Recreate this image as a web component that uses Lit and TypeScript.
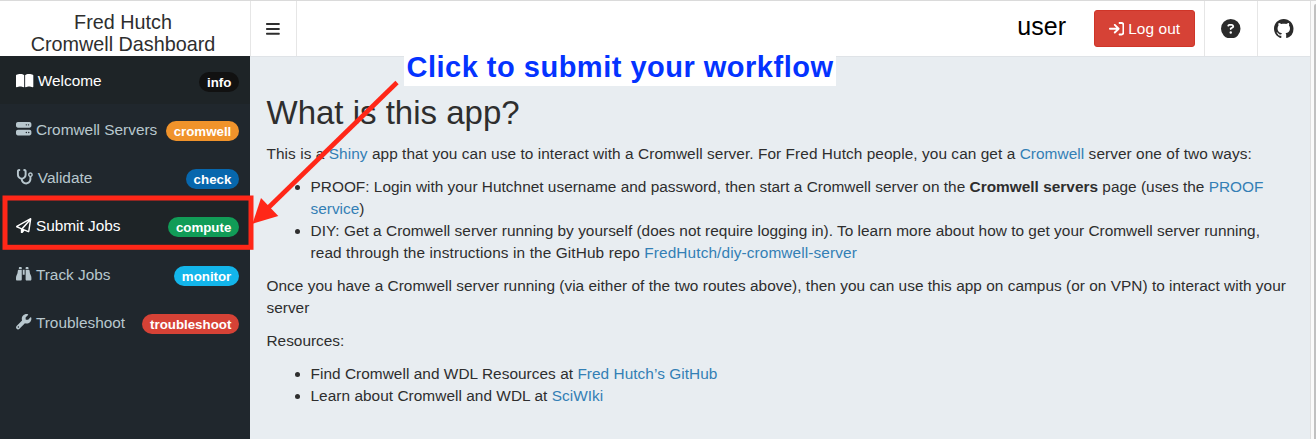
import { LitElement, html, css, svg } from "lit";
import { customElement, property } from "lit/decorators.js";

const ICONS: Record<string, { w: number; h: number; d: string }> = {
  book: { w: 576, h: 512, d: "M249.6 471.5c10.8 3.8 22.4-4.1 22.4-15.5V78.6c0-4.2-1.6-8.4-5-11C247.4 52 202.4 32 144 32C93.5 32 46.3 45.3 18.1 56.1C6.8 60.5 0 71.7 0 83.8V454.1c0 11.9 12.8 20.2 24.1 16.5C55.6 460.1 105.5 448 144 448c33.9 0 79 14 105.6 23.5zm76.8 0C353 462 398.1 448 432 448c38.5 0 88.4 12.1 119.9 22.6c11.3 3.8 24.1-4.6 24.1-16.5V83.8c0-12.1-6.8-23.3-18.1-27.6C529.7 45.3 482.5 32 432 32c-58.4 0-103.4 20-123 35.6c-3.3 2.6-5 6.8-5 11V456c0 11.4 11.7 19.3 22.4 15.5z" },
  server: { w: 512, h: 512, d: "M64 32C28.7 32 0 60.7 0 96v64c0 35.3 28.7 64 64 64H448c35.3 0 64-28.7 64-64V96c0-35.3-28.7-64-64-64H64zm280 72a24 24 0 1 1 0 48 24 24 0 1 1 0-48zm48 24a24 24 0 1 1 48 0 24 24 0 1 1 -48 0zM64 288c-35.3 0-64 28.7-64 64v64c0 35.3 28.7 64 64 64H448c35.3 0 64-28.7 64-64V352c0-35.3-28.7-64-64-64H64zm280 72a24 24 0 1 1 0 48 24 24 0 1 1 0-48zm56 24a24 24 0 1 1 48 0 24 24 0 1 1 -48 0z" },
  stethoscope: { w: 576, h: 512, d: "M142.4 21.9c5.6 16.8-3.5 34.9-20.2 40.5L96 71.1V192c0 53 43 96 96 96s96-43 96-96V71.1l-26.1-8.7c-16.8-5.6-25.8-23.7-20.2-40.5s23.7-25.8 40.5-20.2l26.1 8.7C334.4 19.1 352 43.5 352 71.1V192c0 77.2-54.6 141.6-127.3 156.7C231 404.6 278.4 448 336 448c61.9 0 112-50.1 112-112V265.3c-28.3-12.3-48-40.5-48-73.3c0-44.2 35.8-80 80-80s80 35.8 80 80c0 32.8-19.7 61-48 73.3V336c0 97.2-78.8 176-176 176c-92.9 0-168.9-71.9-175.5-163.1C87.2 334.2 32 269.6 32 192V71.1c0-27.5 17.6-52 43.8-60.7l26.1-8.7c16.8-5.6 34.9 3.5 40.5 20.2zM480 224a32 32 0 1 0 0-64 32 32 0 1 0 0 64z" },
  plane: { w: 512, h: 512, d: "M16.1 260.2c-22.6 12.9-20.5 47.3 3.6 57.3L160 376V479.3c0 18.1 14.6 32.7 32.7 32.7c9.7 0 18.9-4.3 25.1-11.8l62-74.3 123.9 51.6c18.9 7.9 40.8-4.5 43.9-24.7l64-416c1.9-12.1-3.4-24.3-13.5-31.2s-23.3-7.5-34-1.4l-448 256zm52.1 25.5L409.7 90.6 190.1 336l1.2 1L68.2 285.7zM403.3 425.4L236.7 355.9 450.8 116.6 403.3 425.4z" },
  binoculars: { w: 512, h: 512, d: "M128 32h32c17.7 0 32 14.3 32 32V96H96V64c0-17.7 14.3-32 32-32zm64 96V448c0 17.7-14.3 32-32 32H32c-17.7 0-32-14.3-32-32V388.9c0-34.6 9.4-68.6 27.2-98.3C40.9 267.8 49.7 242.4 53 216L60.5 156c2-16 15.6-28 31.8-28H192zm227.8 0c16.1 0 29.8 12 31.8 28L459 216c3.3 26.4 12.1 51.8 25.8 74.6c17.8 29.7 27.2 63.7 27.2 98.3V448c0 17.7-14.3 32-32 32H352c-17.7 0-32-14.3-32-32V128h99.8zM320 64c0-17.7 14.3-32 32-32h32c17.7 0 32 14.3 32 32V96H320V64zm-32 64V288H224V128h64z" },
  wrench: { w: 512, h: 512, d: "M352 320c88.4 0 160-71.6 160-160c0-15.3-2.2-30.1-6.2-44.2c-3.1-10.8-16.4-13.2-24.3-5.3l-76.8 76.8c-3 3-7.1 4.7-11.3 4.7H336c-8.8 0-16-7.2-16-16V118.6c0-4.2 1.7-8.3 4.7-11.3l76.8-76.8c7.9-7.9 5.4-21.2-5.3-24.3C382.1 2.2 367.3 0 352 0C263.6 0 192 71.6 192 160c0 19.1 3.4 37.5 9.5 54.5L19.9 396.1C7.2 408.8 0 426.1 0 444.1C0 481.6 30.4 512 67.9 512c18 0 35.3-7.2 48-19.9L297.5 310.5c17 6.2 35.4 9.5 54.5 9.5zM80 408a24 24 0 1 1 0 48 24 24 0 1 1 0-48z" },
  bars: { w: 448, h: 512, d: "M0 96C0 78.3 14.3 64 32 64H416c17.7 0 32 14.3 32 32s-14.3 32-32 32H32C14.3 128 0 113.7 0 96zM0 256c0-17.7 14.3-32 32-32H416c17.7 0 32 14.3 32 32s-14.3 32-32 32H32c-17.7 0-32-14.3-32-32zM448 416c0 17.7-14.3 32-32 32H32c-17.7 0-32-14.3-32-32s14.3-32 32-32H416c17.7 0 32 14.3 32 32z" },
  logout: { w: 512, h: 512, d: "M352 96l64 0c17.7 0 32 14.3 32 32l0 256c0 17.7-14.3 32-32 32l-64 0c-17.7 0-32 14.3-32 32s14.3 32 32 32l64 0c53 0 96-43 96-96l0-256c0-53-43-96-96-96l-64 0c-17.7 0-32 14.3-32 32s14.3 32 32 32zm-9.4 182.6c12.5-12.5 12.5-32.8 0-45.3l-128-128c-12.5-12.5-32.8-12.5-45.3 0s-12.5 32.8 0 45.3L242.7 224 32 224c-17.7 0-32 14.3-32 32s14.3 32 32 32l210.7 0-73.4 73.4c-12.5 12.5-12.5 32.8 0 45.3s32.8 12.5 45.3 0l128-128z" },
  question: { w: 512, h: 512, d: "M256 512A256 256 0 1 0 256 0a256 256 0 1 0 0 512zM169.8 165.3c7.9-22.3 29.1-37.3 52.8-37.3h58.3c34.9 0 63.1 28.3 63.1 63.1c0 22.6-12.1 43.5-31.7 54.8L280 264.4c-.2 13-10.9 23.6-24 23.6c-13.3 0-24-10.7-24-24V250.5c0-8.6 4.6-16.5 12.1-20.8l44.3-25.4c4.7-2.7 7.6-7.7 7.6-13.1c0-8.4-6.8-15.1-15.1-15.1H222.6c-3.4 0-6.4 2.1-7.5 5.3l-.4 1.2c-4.4 12.5-18.2 19-30.6 14.6s-19-18.2-14.6-30.6l.4-1.2zM224 352a32 32 0 1 1 64 0 32 32 0 1 1 -64 0z" },
  github: { w: 16, h: 16, d: "M8 0C3.58 0 0 3.58 0 8c0 3.54 2.29 6.53 5.47 7.59.4.07.55-.17.55-.38 0-.19-.01-.82-.01-1.49-2.01.37-2.53-.49-2.69-.94-.09-.23-.48-.94-.82-1.13-.28-.15-.68-.52-.01-.53.63-.01 1.08.58 1.23.82.72 1.21 1.87.87 2.33.66.07-.52.28-.87.51-1.07-1.78-.2-3.64-.89-3.64-3.95 0-.87.31-1.59.82-2.15-.08-.2-.36-1.02.08-2.12 0 0 .67-.21 2.2.82.64-.18 1.32-.27 2-.27.68 0 1.36.09 2 .27 1.53-1.04 2.2-.82 2.2-.82.44 1.1.16 1.92.08 2.12.51.56.82 1.27.82 2.15 0 3.07-1.87 3.75-3.65 3.95.29.25.54.73.54 1.48 0 1.07-.01 1.93-.01 2.2 0 .21.15.46.55.38A8.01 8.01 0 0 0 16 8c0-4.42-3.58-8-8-8z" },
};

@customElement("fa-icon")
class FaIcon extends LitElement {
  @property() name = "bars";
  static styles = css`
    :host { display: inline-flex; height: 15.4px; }
    svg { height: 100%; width: auto; display: block; fill: currentColor; }
  `;
  render() {
    const i = ICONS[this.name];
    return html`<svg viewBox="0 0 ${i.w} ${i.h}" width=${i.w} height=${i.h}>${svg`<path d=${i.d}></path>`}</svg>`;
  }
}

const MENU = [
  { icon: "book", label: "Welcome", badge: "info", tone: "black", active: true },
  { icon: "server", label: "Cromwell Servers", badge: "cromwell", tone: "orange" },
  { icon: "stethoscope", label: "Validate", badge: "check", tone: "blue" },
  { icon: "plane", label: "Submit Jobs", badge: "compute", tone: "green", active: true },
  { icon: "binoculars", label: "Track Jobs", badge: "monitor", tone: "aqua" },
  { icon: "wrench", label: "Troubleshoot", badge: "troubleshoot", tone: "red" },
];

@customElement("side-menu")
class SideMenu extends LitElement {
  static styles = css`
    :host { display: block; background: #20272d; }
    .item {
      box-sizing: border-box; height: 48.4px; padding: 0 11px 0 16.3px;
      display: flex; align-items: center; color: #b8c7ce; font-size: 15.4px; white-space: nowrap;
    }
    .active { background: #1e2427; color: #fff; }
    .label { margin: 2px 0 0 4.2px; line-height: 22px; }
    .badge {
      margin-left: auto; margin-top: 4px; height: 20px; line-height: 21px; padding: 0 7.7px;
      border-radius: 10px; font-size: 13.3px; font-weight: bold; color: #fff; box-sizing: border-box;
    }
    .black { background: #111; }
    .orange { background: #f0932b; }
    .blue { background: #0767ad; }
    .green { background: #119c57; }
    .aqua { background: #13b5ea; }
    .red { background: #d64236; }
  `;
  render() {
    return MENU.map(
      (m) => html`<div class="item ${m.active ? "active" : ""}">
        <fa-icon name=${m.icon}></fa-icon><span class="label">${m.label}</span>
        <span class="badge ${m.tone}">${m.badge}</span>
      </div>`
    );
  }
}

@customElement("app-root")
class AppRoot extends LitElement {
  static styles = css`
    :host {
      display: block; position: relative; height: 439px; width: 1316px; overflow: hidden; background: #fff;
      font-family: "Liberation Sans", Arial, sans-serif; font-size: 15.4px; color: #2e2e2e; line-height: 22px;
    }
    .page {
      box-sizing: border-box; height: 439px; border-top: 1px solid #dadada;
      display: grid; grid-template-columns: 250px 1060px 6px; grid-template-rows: 55px 383px;
    }
    .brand { text-align: center; font-size: 19.8px; line-height: 22px; padding-top: 10px; padding-right: 4px; white-space: nowrap; }
    .bar { display: flex; border-bottom: 1px solid #dfe3e7; box-sizing: border-box; height: 56px; }
    .cell { width: 46px; border-right: 1px solid #e6e6e6; display: flex; align-items: center; justify-content: center; }
    .start { border-left: 1px solid #e6e6e6; box-sizing: border-box; width: 47px; padding-right: 1px; }
    .start fa-icon { height: 15.8px; }
    .right { margin-left: auto; display: flex; }
    .end { box-sizing: border-box; width: 53px; border-left: 1px solid #e6e6e6; border-right: 0; color: #2b2b2b; }
    .end fa-icon { height: 19.5px; }
    .user { font-size: 25px; color: #000; line-height: 28px; margin: 11px 28px 0 0; }
    .logout {
      box-sizing: border-box; width: 101px; height: 37px; margin: 9px 9px 0 0; border: 1px solid #cf3528; border-radius: 3px;
      background: #d64236; color: #fff; display: flex; align-items: center; justify-content: center; gap: 4px; letter-spacing: 0.1px;
    }
    .scroll { grid-column: 3; grid-row: 1 / 3; display: flex; justify-content: flex-end; border-left: 1px solid #dedede; background: #fafafa; }
    .thumb { width: 2px; margin-top: 3px; background: #c1c1c1; border-top-left-radius: 2px; }
    side-menu { grid-row: 2; }
    .content { background: #e8edf1; padding: 0 16.5px; }
    .bar, .content { position: relative; }
    .bar { z-index: 1; }
    h2 { margin: 39px 0 0; font-size: 33px; line-height: 36px; font-weight: normal; }
    p { margin: 0 0 11px; white-space: nowrap; }
    h2 + p { margin-top: 12px; }
    ul { margin: 0 0 11px; padding-left: 44px; white-space: nowrap; }
    a { color: #337fb5; text-decoration: none; }
    .l1 { letter-spacing: 0.065px; }
    .l2 { letter-spacing: 0.013px; }
    .l3 { letter-spacing: 0.02px; }
    .l4 { letter-spacing: 0.107px; }
    .l5 { letter-spacing: 0.027px; }
    .l6, .l7 { letter-spacing: 0.042px; }
    .overlay { position: absolute; inset: 0; z-index: 3; width: 1316px; height: 439px; }
    .note {
      position: absolute; z-index: 2; left: 404px; top: 50px; width: 432px; height: 36px; box-sizing: border-box; padding-left: 2.5px;
      background: #fff; color: #0433ff; font-size: 29px; line-height: 34px; font-weight: bold; white-space: nowrap; letter-spacing: 0.5px;
    }
  `;
  render() {
    return html`
      <div class="page">
        <div class="brand">Fred Hutch<br />Cromwell Dashboard</div>
        <div class="bar">
          <div class="cell start"><fa-icon name="bars"></fa-icon></div>
          <div class="right">
            <span class="user">user</span>
            <div class="logout"><fa-icon name="logout"></fa-icon><span>Log out</span></div>
            <div class="cell end"><fa-icon name="question"></fa-icon></div>
            <div class="cell end"><fa-icon name="github"></fa-icon></div>
          </div>
        </div>
        <div class="scroll"><div class="thumb"></div></div>
        <side-menu></side-menu>
        <div class="content">
          <h2>What is this app?</h2>
          <p class="l1">This is a <a>Shiny</a> app that you can use to interact with a Cromwell server. For Fred Hutch people, you can get a <a>Cromwell</a> server one of two ways:</p>
          <ul>
            <li><span class="l2">PROOF: Login with your Hutchnet username and password, then start a Cromwell server on the <b>Cromwell servers</b> page (uses the <a>PROOF</a></span><br /><a>service</a>)</li>
            <li><span class="l3">DIY: Get a Cromwell server running by yourself (does not require logging in). To learn more about how to get your Cromwell server running,</span><br /><span class="l4">read through the instructions in the GitHub repo <a>FredHutch/diy-cromwell-server</a></span></li>
          </ul>
          <p><span class="l5">Once you have a Cromwell server running (via either of the two routes above), then you can use this app on campus (or on VPN) to interact with your</span><br />server</p>
          <p>Resources:</p>
          <ul>
            <li class="l6">Find Cromwell and WDL Resources at <a>Fred Hutch’s GitHub</a></li>
            <li class="l7">Learn about Cromwell and WDL at <a>SciWIki</a></li>
          </ul>
        </div>
      </div>
      <div class="note">Click to submit your workflow</div>
      <svg class="overlay" viewBox="0 0 1316 439">
        <rect x="5" y="198" width="246" height="49.3" fill="none" stroke="#ff2718" stroke-width="5"></rect>
        <path d="M397 82.5L266 210" stroke="#ff2718" stroke-width="4.6" fill="none"></path>
        <path d="M252.5 223.7L261 198L278.3 216Z" fill="#ff2718"></path>
      </svg>
    `;
  }
}
